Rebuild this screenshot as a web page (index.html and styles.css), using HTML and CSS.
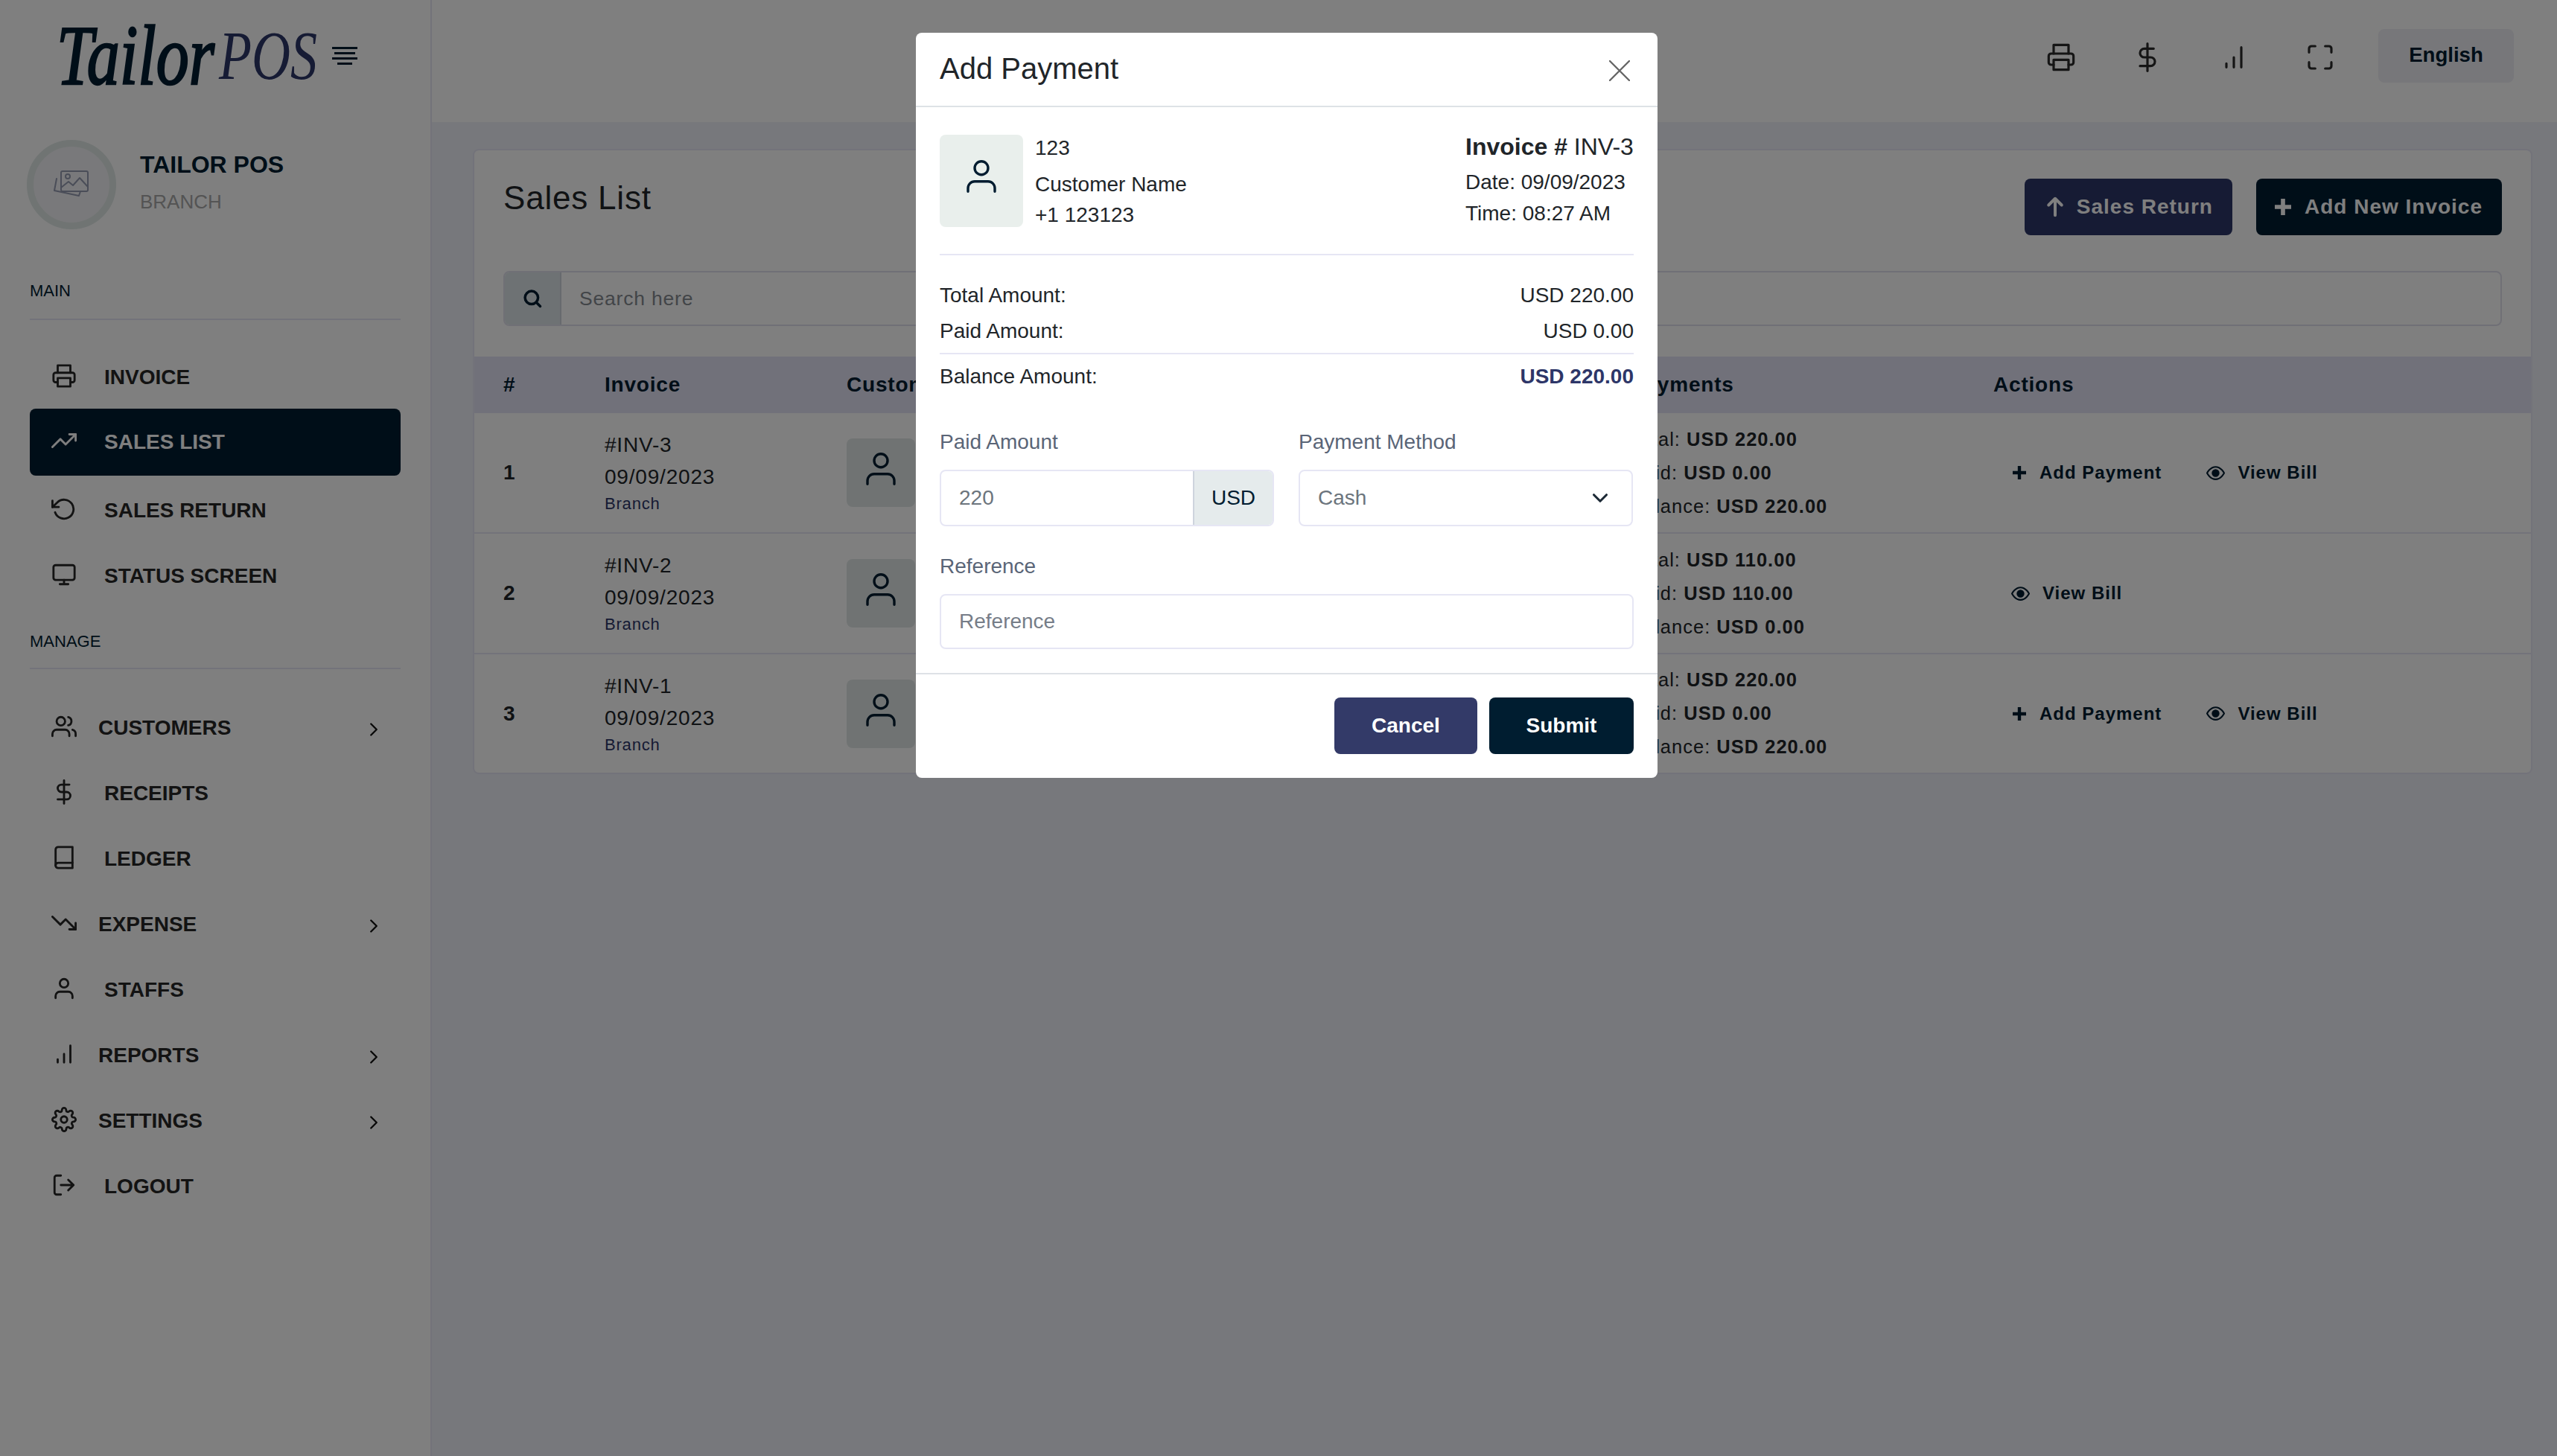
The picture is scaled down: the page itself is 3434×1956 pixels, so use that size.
FILE: index.html
```html
<!DOCTYPE html>
<html lang="en">
<head>
  <meta charset="UTF-8" />
  <title>Tailor POS - Sales List</title>
  <link rel="stylesheet" href="styles.css">
</head>
<body>
  <svg class="sprite" width="0" height="0">
    <symbol id="i-printer" viewBox="0 0 24 24"><path d="M6 9V2h12v7"/><path d="M6 18H4a2 2 0 0 1-2-2v-5a2 2 0 0 1 2-2h16a2 2 0 0 1 2 2v5a2 2 0 0 1-2 2h-2"/><rect x="6" y="14" width="12" height="8"/></symbol>
    <symbol id="i-up" viewBox="0 0 24 24"><path d="M1 18 8.500 10.500l5 5L23 6"/><path d="M17 6h6v6"/></symbol>
    <symbol id="i-down" viewBox="0 0 24 24"><path d="M1 6l7.500 7.500 5-5L23 18"/><path d="M17 18h6v-6"/></symbol>
    <symbol id="i-rotate" viewBox="0 0 24 24"><path d="M1 4v6h6"/><path d="M3.510 15a9 9 0 1 0 2.130-9.360L1 10"/></symbol>
    <symbol id="i-monitor" viewBox="0 0 24 24"><rect x="2" y="3" width="20" height="14" rx="2"/><path d="M8 21h8M12 17v4"/></symbol>
    <symbol id="i-users" viewBox="0 0 24 24"><path d="M17 21v-2a4 4 0 0 0-4-4H5a4 4 0 0 0-4 4v2"/><circle cx="9" cy="7" r="4"/><path d="M23 21v-2a4 4 0 0 0-3-3.870"/><path d="M16 3.130a4 4 0 0 1 0 7.750"/></symbol>
    <symbol id="i-dollar" viewBox="0 0 24 24"><path d="M12 1v22"/><path d="M17 5H9.500a3.500 3.500 0 0 0 0 7h5a3.500 3.500 0 0 1 0 7H6"/></symbol>
    <symbol id="i-book" viewBox="0 0 24 24"><path d="M4 19.500A2.500 2.500 0 0 1 6.500 17H20"/><path d="M6.500 2H20v20H6.500A2.500 2.500 0 0 1 4 19.500v-15A2.500 2.500 0 0 1 6.500 2z"/></symbol>
    <symbol id="i-user" viewBox="0 0 24 24"><path d="M20 21v-2a4 4 0 0 0-4-4H8a4 4 0 0 0-4 4v2"/><circle cx="12" cy="7" r="4"/></symbol>
    <symbol id="i-bars" viewBox="0 0 24 24"><path d="M6 20v-3M12 20v-8M18 20V4"/></symbol>
    <symbol id="i-gear" viewBox="0 0 24 24"><circle cx="12" cy="12" r="3"/><path d="M19.400 15a1.650 1.650 0 0 0 .33 1.820l.06.06a2 2 0 0 1 0 2.830 2 2 0 0 1-2.830 0l-.06-.06a1.650 1.650 0 0 0-1.820-.33 1.650 1.650 0 0 0-1 1.510V21a2 2 0 0 1-2 2 2 2 0 0 1-2-2v-.09A1.650 1.650 0 0 0 9 19.400a1.650 1.650 0 0 0-1.820.33l-.06.06a2 2 0 0 1-2.830 0 2 2 0 0 1 0-2.830l.06-.06a1.650 1.650 0 0 0 .33-1.820 1.650 1.650 0 0 0-1.510-1H3a2 2 0 0 1-2-2 2 2 0 0 1 2-2h.09A1.650 1.650 0 0 0 4.600 9a1.650 1.650 0 0 0-.33-1.820l-.06-.06a2 2 0 0 1 0-2.830 2 2 0 0 1 2.830 0l.06.06a1.650 1.650 0 0 0 1.820.33H9a1.650 1.650 0 0 0 1-1.510V3a2 2 0 0 1 2-2 2 2 0 0 1 2 2v.09a1.650 1.650 0 0 0 1 1.510 1.650 1.650 0 0 0 1.820-.33l.06-.06a2 2 0 0 1 2.830 0 2 2 0 0 1 0 2.830l-.06.06a1.650 1.650 0 0 0-.33 1.820V9a1.650 1.650 0 0 0 1.510 1H21a2 2 0 0 1 2 2 2 2 0 0 1-2 2h-.09a1.650 1.650 0 0 0-1.510 1z"/></symbol>
    <symbol id="i-logout" viewBox="0 0 24 24"><path d="M9 21H5a2 2 0 0 1-2-2V5a2 2 0 0 1 2-2h4"/><path d="M16 17l5-5-5-5M21 12H9"/></symbol>
    <symbol id="i-right" viewBox="0 0 24 24"><path d="M9 18l6-6-6-6"/></symbol>
    <symbol id="i-chev" viewBox="0 0 24 24"><path d="M6 9l6 6 6-6"/></symbol>
    <symbol id="i-full" viewBox="0 0 24 24"><path d="M8 3H5a2 2 0 0 0-2 2v3M21 8V5a2 2 0 0 0-2-2h-3M16 21h3a2 2 0 0 0 2-2v-3M3 16v3a2 2 0 0 0 2 2h3"/></symbol>
    <symbol id="i-search" viewBox="0 0 24 24"><circle cx="11" cy="11" r="7.500"/><path d="M21 21l-4.500-4.500"/></symbol>
    <symbol id="i-plus" viewBox="5 5 14 14"><path d="M12 5v14M5 12h14"/></symbol>
    <symbol id="i-arrow" viewBox="0 0 24 24"><path d="M12 21V3M5 10l7-7 7 7"/></symbol>
    <symbol id="i-eye" viewBox="0 0 24 24"><path d="M1 12s4-8 11-8 11 8 11 8-4 8-11 8-11-8-11-8z"/><circle class="solid" cx="12" cy="12" r="4"/></symbol>
    <symbol id="i-close" viewBox="0 0 28 28"><path d="M1 1l26 26M27 1L1 27"/></symbol>
    <symbol id="i-images" viewBox="0 0 48 40"><rect x="10" y="2" width="36" height="27" rx="2"/><circle cx="19" cy="9" r="3"/><path d="M10 24l10-8 6 5 9-10 11 12"/><path d="M4 12 1 28l33 7 2-6"/></symbol>
  </svg>

  <div class="app">
    <aside class="sidebar">
      <div class="brand">
        <span class="logo-tailor">Tailor</span>
        <span class="logo-pos">POS</span>
        <div class="menu-toggle"><span></span><span class="short"></span><span></span><span class="shorter"></span></div>
      </div>

      <div class="profile">
        <div class="profile-pic"><svg class="ico-images"><use href="#i-images"/></svg></div>
        <div class="profile-text">
          <div class="profile-name">TAILOR POS</div>
          <div class="profile-role">BRANCH</div>
        </div>
      </div>

      <div class="nav-title nav-title-main">MAIN</div>
      <nav class="nav">
        <a class="nav-item"><svg class="ico"><use href="#i-printer"/></svg>INVOICE</a>
        <a class="nav-item active"><svg class="ico"><use href="#i-up"/></svg>SALES LIST</a>
        <a class="nav-item"><svg class="ico"><use href="#i-rotate"/></svg>SALES RETURN</a>
        <a class="nav-item"><svg class="ico"><use href="#i-monitor"/></svg>STATUS SCREEN</a>
      </nav>

      <div class="nav-title">MANAGE</div>
      <nav class="nav nav-manage">
        <a class="nav-item has-sub"><svg class="ico"><use href="#i-users"/></svg>CUSTOMERS<svg class="ico-right"><use href="#i-right"/></svg></a>
        <a class="nav-item"><svg class="ico"><use href="#i-dollar"/></svg>RECEIPTS</a>
        <a class="nav-item"><svg class="ico"><use href="#i-book"/></svg>LEDGER</a>
        <a class="nav-item has-sub"><svg class="ico"><use href="#i-down"/></svg>EXPENSE<svg class="ico-right"><use href="#i-right"/></svg></a>
        <a class="nav-item"><svg class="ico"><use href="#i-user"/></svg>STAFFS</a>
        <a class="nav-item has-sub"><svg class="ico"><use href="#i-bars"/></svg>REPORTS<svg class="ico-right"><use href="#i-right"/></svg></a>
        <a class="nav-item has-sub"><svg class="ico"><use href="#i-gear"/></svg>SETTINGS<svg class="ico-right"><use href="#i-right"/></svg></a>
        <a class="nav-item"><svg class="ico"><use href="#i-logout"/></svg>LOGOUT</a>
      </nav>
    </aside>

    <div class="content">
      <header class="topbar">
        <svg class="top-ico"><use href="#i-printer"/></svg>
        <svg class="top-ico"><use href="#i-dollar"/></svg>
        <svg class="top-ico"><use href="#i-bars"/></svg>
        <svg class="top-ico"><use href="#i-full"/></svg>
        <div class="lang">English</div>
      </header>

      <main class="page">
        <section class="card">
          <div class="card-head">
            <h1>Sales List</h1>
            <div class="card-btns">
              <a class="btn btn-blue"><svg class="btn-ico"><use href="#i-arrow"/></svg>Sales Return</a>
              <a class="btn btn-dark"><svg class="btn-ico btn-ico-plus"><use href="#i-plus"/></svg>Add New Invoice</a>
            </div>
          </div>

          <div class="search">
            <div class="search-addon"><svg class="search-ico"><use href="#i-search"/></svg></div>
            <div class="search-text">Search here</div>
          </div>

          <div class="row row-head">
            <div>#</div>
            <div>Invoice</div>
            <div>Customer</div>
            <div>Payments</div>
            <div>Actions</div>
          </div>

          <div class="row">
            <div class="num">1</div>
            <div class="inv"><div>#INV-3</div><div>09/09/2023</div><small>Branch</small></div>
            <div class="cust"><div class="cust-pic"><svg class="cust-ico"><use href="#i-user"/></svg></div></div>
            <div class="pay"><div>Total: <b>USD 220.00</b></div><div>Paid: <b>USD 0.00</b></div><div>Balance: <b>USD 220.00</b></div></div>
            <div class="acts">
              <a class="act act-add"><svg class="act-ico-plus"><use href="#i-plus"/></svg>Add Payment</a>
              <a class="act act-view"><svg class="act-ico-eye"><use href="#i-eye"/></svg>View Bill</a>
            </div>
          </div>

          <div class="row">
            <div class="num">2</div>
            <div class="inv"><div>#INV-2</div><div>09/09/2023</div><small>Branch</small></div>
            <div class="cust"><div class="cust-pic"><svg class="cust-ico"><use href="#i-user"/></svg></div></div>
            <div class="pay"><div>Total: <b>USD 110.00</b></div><div>Paid: <b>USD 110.00</b></div><div>Balance: <b>USD 0.00</b></div></div>
            <div class="acts">
              <a class="act act-view act-first"><svg class="act-ico-eye"><use href="#i-eye"/></svg>View Bill</a>
            </div>
          </div>

          <div class="row">
            <div class="num">3</div>
            <div class="inv"><div>#INV-1</div><div>09/09/2023</div><small>Branch</small></div>
            <div class="cust"><div class="cust-pic"><svg class="cust-ico"><use href="#i-user"/></svg></div></div>
            <div class="pay"><div>Total: <b>USD 220.00</b></div><div>Paid: <b>USD 0.00</b></div><div>Balance: <b>USD 220.00</b></div></div>
            <div class="acts">
              <a class="act act-add"><svg class="act-ico-plus"><use href="#i-plus"/></svg>Add Payment</a>
              <a class="act act-view"><svg class="act-ico-eye"><use href="#i-eye"/></svg>View Bill</a>
            </div>
          </div>
        </section>
      </main>
    </div>
  </div>

  <div class="backdrop">
    <div class="modal">
      <div class="modal-head">
        <h2>Add Payment</h2>
        <svg class="modal-close"><use href="#i-close"/></svg>
      </div>

      <div class="modal-body">
        <div class="info">
          <div class="info-pic"><svg class="info-ico"><use href="#i-user"/></svg></div>
          <div class="info-cust">
            <div class="l1">123</div>
            <div class="l2">Customer Name</div>
            <div class="l3">+1 123123</div>
          </div>
          <div class="info-inv">
            <div class="inv-no"><b>Invoice #</b> INV-3</div>
            <div class="l2">Date: 09/09/2023</div>
            <div class="l3">Time: 08:27 AM</div>
          </div>
        </div>

        <div class="totals">
          <div class="total-row"><span>Total Amount:</span><span>USD 220.00</span></div>
          <div class="total-row"><span>Paid Amount:</span><span>USD 0.00</span></div>
          <div class="total-row total-balance"><span>Balance Amount:</span><b>USD 220.00</b></div>
        </div>

        <div class="form-row">
          <div class="field">
            <label>Paid Amount</label>
            <div class="input input-group"><span class="input-val">220</span><span class="addon">USD</span></div>
          </div>
          <div class="field">
            <label>Payment Method</label>
            <div class="input input-select"><span class="input-val">Cash</span><svg class="select-ico"><use href="#i-chev"/></svg></div>
          </div>
        </div>

        <div class="field field-ref">
          <label>Reference</label>
          <div class="input"><span class="input-val input-ph">Reference</span></div>
        </div>
      </div>

      <div class="modal-foot">
        <a class="mbtn mbtn-cancel">Cancel</a>
        <a class="mbtn mbtn-submit">Submit</a>
      </div>
    </div>
  </div>
</body>
</html>
```

FILE: styles.css
```css
* {
  box-sizing: border-box;
}

html, body {
  margin: 0;
  height: 100%;
  overflow: hidden;
}

body {
  font-family: "Liberation Sans", Arial, sans-serif;
  color: #212529;
  background: #eef1f8;
}

.sprite {
  position: absolute;
}

svg {
  fill: none;
  stroke: currentColor;
  stroke-linecap: round;
  stroke-linejoin: round;
  stroke-width: 2;
  flex: none;
}

.solid {
  fill: currentColor;
}

.app {
  display: flex;
  height: 1956px;
}

/* sidebar */
.sidebar {
  width: 580px;
  flex: none;
  background: #fff;
  border-right: 2px solid #e6e6f4;
}

.brand {
  height: 164px;
  display: flex;
  align-items: center;
  padding: 0 0 14px 76px;
  font-family: "Liberation Serif", serif;
  font-style: italic;
}

.logo-tailor {
  display: block;
  font-size: 88px;
  line-height: 90px;
  color: #001c30;
  transform: scaleY(1.3);
  -webkit-text-stroke: 2px #001c30;
}

.logo-pos {
  display: block;
  margin-left: 6px;
  font-size: 72px;
  line-height: 80px;
  color: #2d3668;
  transform: scaleY(1.3);
}

.menu-toggle {
  width: 34px;
  margin-left: 20px;
  display: flex;
  flex-direction: column;
  align-items: center;
  gap: 4px;
}

.menu-toggle span {
  display: block;
  width: 34px;
  height: 3px;
  background: #001c30;
}

.menu-toggle .short {
  width: 28px;
}

.menu-toggle .shorter {
  width: 20px;
}

.profile {
  display: flex;
  align-items: center;
  gap: 32px;
  padding: 24px 0 0 36px;
}

.profile-pic {
  width: 120px;
  height: 120px;
  border-radius: 50%;
  border: 9px solid #e0e8e6;
  background: #f3f3f6;
  display: flex;
  align-items: center;
  justify-content: center;
  color: #949bb0;
}

.ico-images {
  width: 48px;
  height: 44px;
}

.profile-text {
  margin-top: -8px;
}

.profile-name {
  font-size: 32px;
  font-weight: 700;
  color: #001c30;
  line-height: 40px;
}

.profile-role {
  font-size: 26px;
  color: #a8a8a8;
  line-height: 34px;
  margin-top: 13px;
}

.nav-title {
  margin: 0 40px;
  height: 81px;
  padding-top: 29px;
  font-size: 22px;
  line-height: 30px;
  color: #001c30;
  border-bottom: 2px solid #e6e6f4;
}

.nav-title-main {
  margin-top: 48px;
  padding-top: 20px;
  height: 74px;
}

.nav {
  margin: 33px 40px 0;
}

.nav-manage {
  margin-top: 35px;
}

.nav-item {
  display: flex;
  align-items: center;
  height: 88px;
  padding-left: 28px;
  font-size: 28px;
  font-weight: 700;
  color: #262626;
  border-radius: 8px;
}

.nav-item.active {
  height: 90px;
  margin: -2px 0 3px;
  background: #001c30;
  color: #fff;
}

.ico {
  width: 34px;
  height: 34px;
  margin: -4px 37px 0 1px;
}

.has-sub .ico {
  margin-right: 29px;
}

.ico-right {
  width: 30px;
  height: 30px;
  margin-left: auto;
  margin-right: 21px;
  margin-top: 3px;
  stroke-width: 1.9;
  color: #111;
}

/* top bar */
.content {
  flex: 1;
  min-width: 0;
}

.topbar {
  height: 164px;
  background: #fff;
  display: flex;
  align-items: center;
  justify-content: flex-end;
  padding: 0 58px 10px 0;
  color: #2a2a2a;
}

.top-ico {
  width: 40px;
  height: 40px;
  margin-right: 76px;
  stroke-width: 1.9;
}

.top-ico:nth-of-type(4) {
  margin-right: 58px;
}

.lang {
  width: 182px;
  height: 72px;
  border-radius: 8px;
  background: #eeeef4;
  color: #001c30;
  font-size: 27.6px;
  font-weight: 700;
  line-height: 70px;
  text-align: center;
  margin-top: -4px;
}

/* sales list card */
.page {
  padding: 36px 33px 0 55px;
}

.card {
  background: #fff;
  border: 2px solid #e6e6f4;
  border-radius: 8px;
  letter-spacing: .8px;
}

.card-head {
  display: flex;
  justify-content: space-between;
  align-items: flex-start;
  padding: 38px 39px 0;
  height: 162px;
}

h1 {
  margin: 0;
  font-size: 44px;
  font-weight: 400;
  line-height: 52px;
}

.card-btns {
  display: flex;
  gap: 32px;
}

.btn {
  display: flex;
  align-items: center;
  height: 76px;
  padding: 0 26px;
  border-radius: 8px;
  color: #fff;
  font-size: 28px;
  font-weight: 700;
  letter-spacing: 1px;
}

.btn-blue {
  background: #2d3668;
}

.btn-dark {
  padding-left: 23px;
  background: #001c30;
}

.btn-ico {
  width: 30px;
  height: 30px;
  margin-right: 14px;
  stroke-width: 3.2;
}

.btn-ico-plus {
  width: 22px;
  height: 22px;
  margin-right: 18px;
  margin-left: 2px;
  stroke-width: 3.6;
}

.search {
  display: flex;
  height: 74px;
  margin: 0 39px;
  border: 2px solid #e0e0ec;
  border-radius: 8px;
  overflow: hidden;
}

.search-addon {
  width: 76px;
  background: #dde5e8;
  border-right: 2px solid #ced4dd;
  display: flex;
  align-items: center;
  justify-content: center;
  color: #001c30;
}

.search-ico {
  width: 28px;
  height: 28px;
  stroke-width: 3;
}

.search-text {
  padding-left: 24px;
  font-size: 26.5px;
  line-height: 70px;
  color: #858a91;
}

.row {
  display: grid;
  grid-template-columns: 136px 325px 1053px 487px 1fr;
  align-items: center;
  height: 162px;
  padding-left: 39px;
  border-bottom: 2px solid #e6e6f4;
  font-size: 28px;
}

.row:last-child {
  height: 159px;
  border-bottom: 0;
}

.row-head {
  height: 76px;
  margin-top: 41px;
  background: #e2e2f4;
  font-weight: 700;
  color: #001c30;
  border-bottom: 0;
}

.num {
  font-weight: 700;
}

.inv {
  margin-top: -2px;
}

.inv div {
  line-height: 43px;
}

.inv small {
  display: block;
  font-size: 22px;
  line-height: 30px;
  color: #2d3668;
}

.cust-pic {
  width: 92px;
  height: 92px;
  background: #e0e7e6;
  border-radius: 8px;
  display: flex;
  align-items: center;
  justify-content: center;
  color: #001c30;
}

.cust-ico {
  width: 54px;
  height: 54px;
  margin-top: -10px;
  stroke-width: 1.5;
}

.pay {
  font-size: 25.5px;
  line-height: 45px;
  letter-spacing: 1px;
}

.acts {
  display: flex;
  align-items: center;
}

.act {
  display: flex;
  align-items: center;
  color: #001c30;
  font-size: 24px;
  font-weight: 700;
  letter-spacing: 1px;
}

.act-add {
  margin-left: 26px;
}

.act-view {
  margin-left: 60px;
}

.act-first {
  margin-left: 24px;
}

.act-ico-plus {
  width: 18px;
  height: 18px;
  margin-right: 18px;
  stroke-width: 3.4;
}

.act-ico-eye {
  width: 25px;
  height: 25px;
  margin-right: 17px;
}

/* modal */
.backdrop {
  position: fixed;
  inset: 0;
  background: rgba(0, 0, 0, .5);
}

.modal {
  width: 996px;
  margin: 44px 0 0 1230px;
  background: #fff;
  border-radius: 8px;
}

.modal-head {
  display: flex;
  align-items: center;
  justify-content: space-between;
  height: 100px;
  padding: 0 37px 0 32px;
  border-bottom: 2px solid #dee2e6;
}

h2 {
  margin: 0 0 2px;
  font-size: 40px;
  font-weight: 400;
}

.modal-close {
  width: 28px;
  height: 28px;
  margin-top: 4px;
  color: #666;
  stroke-width: 2.4;
}

.modal-body {
  padding: 0 32px;
  font-size: 28px;
}

.info {
  display: flex;
  height: 199px;
  padding-top: 37px;
  border-bottom: 2px solid #e6e6f4;
}

.info-pic {
  width: 112px;
  height: 124px;
  background: #e9efec;
  border-radius: 8px;
  display: flex;
  align-items: center;
  justify-content: center;
  color: #001c30;
}

.info-ico {
  width: 54px;
  height: 54px;
  margin-top: -12px;
  stroke-width: 1.5;
}

.info-cust {
  margin-left: 16px;
}

.info-inv {
  margin-left: auto;
  margin-top: -2px;
  width: 226px;
}

.l1 {
  line-height: 36px;
}

.l2,
.l3 {
  line-height: 42px;
}

.info-cust .l2 {
  margin-top: 10px;
}

.info-cust .l3 {
  margin-top: -1px;
}

.inv-no {
  font-size: 32px;
  line-height: 36px;
}

.info-inv .l2 {
  margin-top: 9px;
}

.total-row {
  display: flex;
  justify-content: space-between;
  line-height: 48px;
}

.totals {
  padding-top: 30px;
}

.total-balance {
  margin-top: 5px;
  padding-top: 6px;
  border-top: 2px solid #e6e6f4;
}

.total-balance b {
  color: #2d3668;
}

.form-row {
  display: grid;
  grid-template-columns: 449px 449px;
  gap: 33px;
  margin-top: 46px;
}

.field label {
  display: block;
  font-size: 28px;
  line-height: 36px;
  color: #5a6577;
  margin-bottom: 19px;
}

.field-ref {
  margin-top: 36px;
}

.input {
  display: flex;
  align-items: center;
  height: 76px;
  border: 2px solid #e6e6f4;
  border-radius: 8px;
  overflow: hidden;
}

.field-ref .input {
  height: 74px;
}

.input-val {
  padding-left: 24px;
  color: #6c757d;
}

.input-ph {
  color: #767d88;
}

.input-select {
  justify-content: space-between;
}

.select-ico {
  width: 34px;
  height: 34px;
  margin-right: 25px;
  color: #1d2a36;
  stroke-width: 2.2;
}

.input-group {
  justify-content: space-between;
}

.addon {
  align-self: stretch;
  width: 107px;
  display: flex;
  align-items: center;
  justify-content: center;
  background: #e5ebec;
  border-left: 2px solid #ced4dd;
  color: #001c30;
}

.modal-foot {
  display: flex;
  justify-content: flex-end;
  gap: 16px;
  margin-top: 32px;
  padding: 31px 32px 32px;
  border-top: 2px solid #dee2e6;
}

.mbtn {
  width: 194px;
  height: 76px;
  border-radius: 8px;
  color: #fff;
  font-size: 28px;
  font-weight: 700;
  line-height: 76px;
  text-align: center;
}

.mbtn-cancel {
  width: 192px;
  background: #333a68;
}

.mbtn-submit {
  background: #001d30;
}
```
